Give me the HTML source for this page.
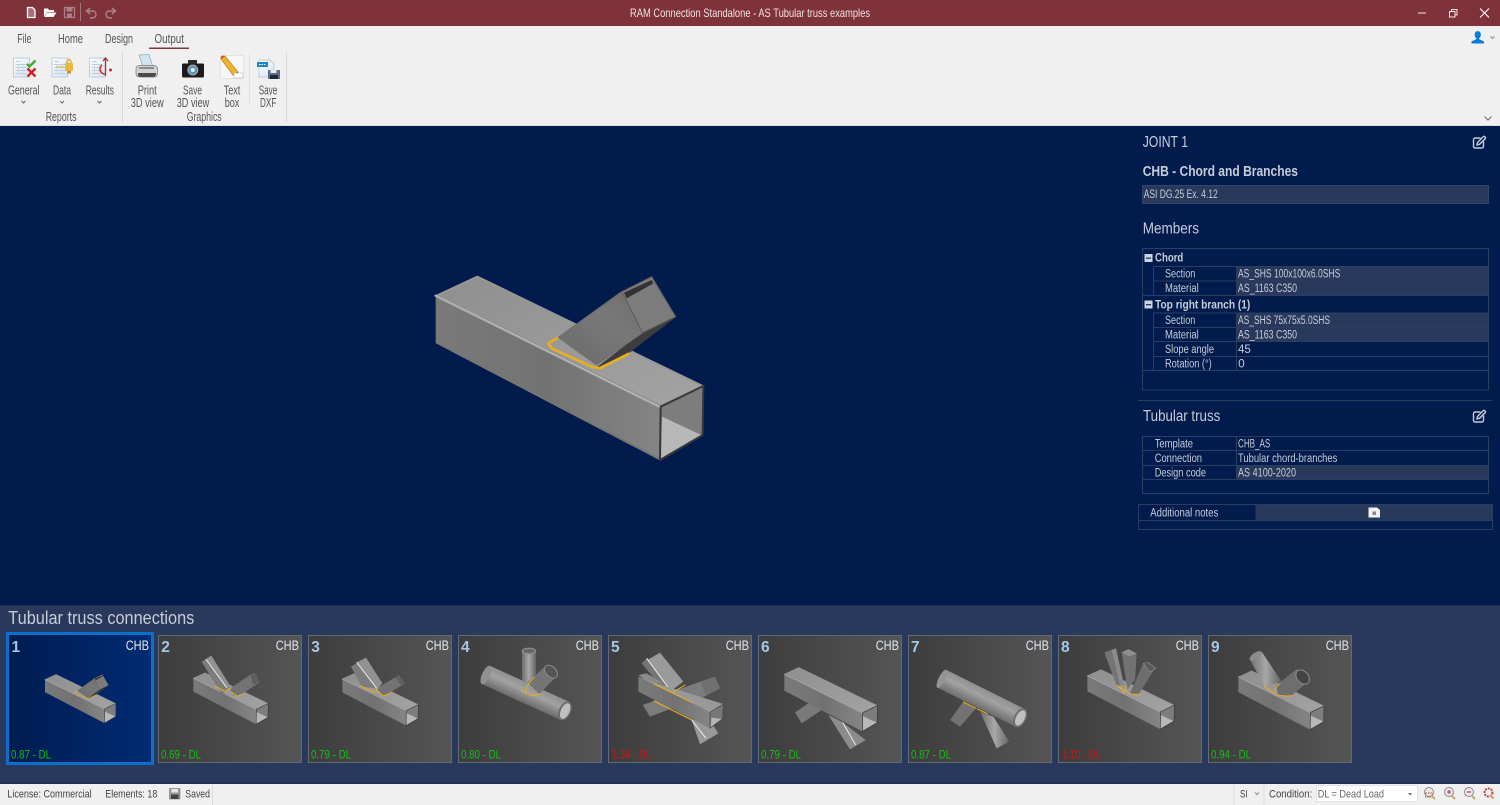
<!DOCTYPE html>
<html lang="en"><head><meta charset="utf-8"><title>RAM Connection Standalone</title>
<style>
html,body{margin:0;padding:0;background:#011b4d;overflow:hidden}
svg{display:block;font-family:"Liberation Sans",sans-serif}
.r{font-size:12.5px;fill:#555}
.t{font-size:11.5px;fill:#c6ccd8}
.b{font-size:12px;fill:#c6ccd8;font-weight:bold}
.h{font-size:15.5px;fill:#c6ccd8}
.c{font-size:13.5px;fill:#e2e7f0}
.n{font-size:15.5px;font-weight:bold;fill:#a3c6ea}
.g{font-size:11.5px;fill:#12c012}
.e{font-size:11.5px;fill:#c81818}
.s{font-size:11px;fill:#444}
.ln{stroke:#2b3d60;stroke-width:1;fill:none}
.fl{fill:#28395b}
.w{fill:none;stroke:#eaae1c;stroke-linejoin:round;stroke-linecap:round}
</style></head><body>
<svg width="1500" height="805" viewBox="0 0 1500 805" xmlns="http://www.w3.org/2000/svg">
<defs>
<filter id="soft" x="-5%" y="-5%" width="110%" height="110%"><feGaussianBlur stdDeviation="1"/></filter>
<linearGradient id="side" x1="0" y1="0" x2="1" y2="0"><stop offset="0" stop-color="#7a7a7a"/><stop offset=".5" stop-color="#727272"/><stop offset="1" stop-color="#858585"/></linearGradient>
<linearGradient id="top" x1="0" y1="0" x2="1" y2="1"><stop offset="0" stop-color="#8f8f8f"/><stop offset="1" stop-color="#a3a3a3"/></linearGradient>
<linearGradient id="bf" x1="0" y1="1" x2="1" y2="0"><stop offset="0" stop-color="#6a6a6a"/><stop offset=".6" stop-color="#787878"/><stop offset="1" stop-color="#6e6e6e"/></linearGradient>
<linearGradient id="gray" x1="0" y1="0" x2="1" y2="0"><stop offset="0" stop-color="#3d3d3d"/><stop offset="1" stop-color="#555"/></linearGradient>
<linearGradient id="blue" x1="0" y1="0" x2="1" y2="0"><stop offset="0" stop-color="#001c50"/><stop offset="1" stop-color="#002c74"/></linearGradient>
<linearGradient id="rnd" x1="0" y1="0" x2="0" y2="1"><stop offset="0" stop-color="#909090"/><stop offset=".4" stop-color="#a2a2a2"/><stop offset="1" stop-color="#6c6c6c"/></linearGradient>
<linearGradient id="rndv" x1="0" y1="0" x2="1" y2="0"><stop offset="0" stop-color="#6e6e6e"/><stop offset=".5" stop-color="#a8a8a8"/><stop offset="1" stop-color="#626262"/></linearGradient>
<linearGradient id="doc" x1="0" y1="0" x2="1" y2="1"><stop offset="0" stop-color="#fff"/><stop offset="1" stop-color="#d2e1ef"/></linearGradient>
<g id="chord">
<polygon points="50,107 172,50 848,378 722,438" fill="url(#top)" stroke="#979797" stroke-width="6" stroke-linejoin="round"/>
<polygon points="50,107 722,440 720,598 50,248" fill="url(#side)" stroke="#767676" stroke-width="6" stroke-linejoin="round"/>
<polyline points="47,107 722,442" stroke="#b0b0b0" stroke-width="7" fill="none" stroke-linecap="round"/>
<polygon points="724,442 848,380 846,525 722,598" fill="#7d7d7d"/>
<polygon points="726,470 844,525 722,596" fill="#b8b8b8"/>
<polygon points="722,440 850,378 848,525 720,600" fill="none" stroke="#383838" stroke-width="6" stroke-linejoin="round"/>
</g>
<g id="branch">
<polygon points="668,218 767,170 630,275 535,320" fill="#3c3c3c" stroke="#3c3c3c" stroke-width="3" stroke-linejoin="round"/>
<polyline class="w" points="415,232 385,250 395,265 515,320 540,325 625,282" stroke-width="8"/>
<polygon points="415,232 605,95 668,218 530,315" fill="url(#bf)" stroke="#6e6e6e" stroke-width="3" stroke-linejoin="round"/>
<polygon points="605,95 695,50 767,170 668,218" fill="#7c7c7c" stroke="#5c5c5c" stroke-width="3" stroke-linejoin="round"/>
<polygon points="612,98 695,60 700,70 620,115" fill="#333"/>
</g>
<g id="edit"><path d="M7.500 2.500H2a1.500 1.500 0 0 0-1.500 1.500v7A1.500 1.500 0 0 0 2 12.500h7a1.500 1.500 0 0 0 1.500-1.500V6" fill="none" stroke="#c6ccd8" stroke-width="1.400"/><path d="M4 9.300l.6-2.400L10.200 1.200a1 1 0 0 1 1.500 0l.5.500a1 1 0 0 1 0 1.500L6.500 8.800z" fill="none" stroke="#c6ccd8" stroke-width="1.400"/></g>
<g id="docic"><rect x=".5" y=".5" width="16" height="19" fill="url(#doc)" stroke="#bccee0"/><path d="M2.500 4h5M2.500 7h11M2.500 10h11M2.500 13h11M2.500 16h11" stroke="#bdcddc" stroke-width="1"/><path d="M5.500 7v10M10 7v10" stroke="#cddae6" stroke-width="1"/></g>
</defs>

<!-- base -->
<rect width="1500" height="805" fill="#011b4d"/>
<rect width="1500" height="26" fill="#7f323a"/>
<rect y="26" width="1500" height="100" fill="#f0f0f0"/>

<!-- title bar -->
<path d="M27.500 7.500h5l2.500 2.500v7.500h-7.500z" fill="#a87076" stroke="#fff" stroke-width="1.300"/>
<path d="M44 17V8.500h4l1 1.500h5v2h-7l-3 5z" fill="#fff"/><path d="M47 12.500h9.500L53.500 17H44.500z" fill="#fff"/>
<rect x="64.500" y="7.500" width="10" height="10" fill="none" stroke="#a98086" stroke-width="1.300"/><rect x="66.500" y="8" width="6" height="3.500" fill="#a98086"/><rect x="67" y="13.500" width="5" height="3.500" fill="#a98086"/>
<rect x="80" y="3" width="1" height="18" fill="#a57278"/>
<path d="M90 8l-3.500 3 3.500 3M87 11h5.500a3.500 3.500 0 0 1 0 7H90" fill="none" stroke="#a98086" stroke-width="1.500"/>
<path d="M112 8l3.500 3-3.500 3M115 11h-5.500a3.500 3.500 0 0 0 0 7H112" fill="none" stroke="#a98086" stroke-width="1.500"/>
<text x="630" y="17" font-size="12" fill="#efe2e3" textLength="240" lengthAdjust="spacingAndGlyphs">RAM Connection Standalone - AS Tubular truss examples</text>
<rect x="1418" y="12.500" width="8" height="1" fill="#f3e6e7"/>
<path d="M1449.500 11.500h5.500v5.500h-5.500zM1451.500 11.500v-2h5.500v5.500h-2" fill="none" stroke="#f3e6e7" stroke-width="1"/>
<path d="M1480 8.500l9 9M1489 8.500l-9 9" stroke="#fff" stroke-width="1.100"/>

<!-- ribbon tabs -->
<text class="r" x="17.300" y="43" textLength="14" lengthAdjust="spacingAndGlyphs">File</text>
<text class="r" x="58" y="43" textLength="25" lengthAdjust="spacingAndGlyphs">Home</text>
<text class="r" x="105" y="43" textLength="28" lengthAdjust="spacingAndGlyphs">Design</text>
<text class="r" x="154.500" y="43" textLength="29.500" lengthAdjust="spacingAndGlyphs">Output</text>
<rect x="149" y="47.500" width="40" height="1.500" fill="#80343c"/>
<path d="M1477.700 31a3.200 3.600 0 0 1 3.200 3.600c0 1.800-1 3.100-1.700 3.700v.8l4.800 2.400v2h-12.500v-2l4.800-2.400v-.8c-.7-.6-1.700-1.900-1.700-3.700a3.200 3.600 0 0 1 3.200-3.600z" fill="#0b7bdc"/>
<path d="M1490.500 36.500l2 2 2-2" fill="none" stroke="#888" stroke-width="1"/>
<path d="M1484.500 116.500l3.500 3.500 3.500-3.500" fill="none" stroke="#666" stroke-width="1"/>

<!-- ribbon icons: reports -->
<use href="#docic" x="13" y="57.500"/>
<path d="M27 64l2.500 2.500 6-6" fill="none" stroke="#3fae2a" stroke-width="2.300"/>
<path d="M27.500 68.500l8 8M35.500 68.500l-8 8" stroke="#d0211f" stroke-width="2.300"/>
<use href="#docic" x="51.500" y="57.500"/>
<rect x="65" y="63" width="8" height="8" rx="1" fill="#e8b93a"/><path d="M67 63v-1.500a2 2 0 0 1 4 0V63" fill="none" stroke="#d8a82a" stroke-width="1.200"/><path d="M56 67h9" stroke="#e6c23c" stroke-width="1.500" stroke-dasharray="2 1"/><rect x="67" y="71" width="4" height="2.500" fill="#d08a30"/>
<use href="#docic" x="89" y="57.500"/>
<path d="M105.500 58v18M103 61l2.500-3 2.500 3" fill="none" stroke="#b52a2a" stroke-width="1.300"/><path d="M102 65a5 5 0 0 0 3 9" fill="none" stroke="#cc2a2a" stroke-width="1.500"/><circle cx="110.500" cy="70" r="1.500" fill="#cc2a2a"/>
<text class="r" x="8" y="94.500" textLength="31.500" lengthAdjust="spacingAndGlyphs">General</text>
<text class="r" x="53" y="94.500" textLength="18" lengthAdjust="spacingAndGlyphs">Data</text>
<text class="r" x="85.700" y="94.500" textLength="28.300" lengthAdjust="spacingAndGlyphs">Results</text>
<path d="M21.500 101l2 2 2-2M60 101l2 2 2-2M97.500 101l2 2 2-2" fill="none" stroke="#666" stroke-width="1"/>
<text class="r" x="45.700" y="121" textLength="30.800" lengthAdjust="spacingAndGlyphs">Reports</text>
<rect x="122" y="52" width="1" height="70" fill="#d8d8d8"/>
<!-- printer -->
<polygon points="139,55 149,54.500 153,67 143,67" fill="#cfe6f4" stroke="#8fa9bc" stroke-width=".7"/>
<path d="M136 69q0-3.500 4-3.500h13q4.500 0 4.500 3.500v4q0 4-4 4H140q-4 0-4-4z" fill="#d4d4d4" stroke="#777" stroke-width=".7"/>
<rect x="139" y="67" width="15" height="2" fill="#8a8a8a"/>
<path d="M138 73h18v1.500q-1 2.500-3.500 2.500h-11q-3.500 0-3.500-2.500z" fill="#4a4a4a"/>
<text class="r" x="137.700" y="94.500" textLength="19" lengthAdjust="spacingAndGlyphs">Print</text>
<text class="r" x="130.700" y="107" textLength="33" lengthAdjust="spacingAndGlyphs">3D view</text>
<!-- camera -->
<rect x="182" y="63.500" width="22" height="14" rx="1.500" fill="#1b1b1b"/><rect x="188" y="60" width="9" height="4" fill="#2a2a2a"/><circle cx="192.800" cy="70" r="5" fill="#5d93bd" stroke="#aaa" stroke-width="1"/><circle cx="192.800" cy="70" r="2" fill="#dfeefa"/>
<text class="r" x="183" y="94.500" textLength="19" lengthAdjust="spacingAndGlyphs">Save</text>
<text class="r" x="176.700" y="107" textLength="32.600" lengthAdjust="spacingAndGlyphs">3D view</text>
<!-- pencil -->
<rect x="220.500" y="55.500" width="23" height="23" fill="#f6f6f6" stroke="#e4e4e4"/>
<polygon points="221,59 225,56 238,72 233,75" fill="#eeb32e" stroke="#b8841a" stroke-width=".7"/>
<polygon points="221,59 225,56 223,55.500 220.500,57" fill="#d2413a"/>
<polygon points="233,75 238,72 238.500,76" fill="#222"/>
<rect x="234" y="73" width="9" height="5" fill="#fff" stroke="#bbb" stroke-width=".6"/>
<text class="r" x="223.700" y="94.500" textLength="16.600" lengthAdjust="spacingAndGlyphs">Text</text>
<text class="r" x="224.700" y="107" textLength="14.600" lengthAdjust="spacingAndGlyphs">box</text>
<path d="M249.500 55v50" stroke="#d5d5d5" stroke-dasharray="1 1"/>
<!-- dxf -->
<path d="M259 60h11l4 4v13h-15z" fill="url(#doc)" stroke="#a9bfd6" stroke-width=".7"/>
<rect x="257" y="62" width="11" height="5" fill="#1f86c4"/><path d="M259 64.500h7" stroke="#fff" stroke-dasharray="1.500 1"/>
<rect x="268" y="70" width="12" height="9" fill="#5a6d82"/><rect x="270.500" y="70" width="6" height="3" fill="#e3ecf3"/><rect x="270" y="75" width="8" height="4" fill="#1d2b38"/>
<text class="r" x="258.700" y="94.500" textLength="18.600" lengthAdjust="spacingAndGlyphs">Save</text>
<text class="r" x="260" y="107" textLength="16.300" lengthAdjust="spacingAndGlyphs">DXF</text>
<text class="r" x="186.700" y="121" textLength="35" lengthAdjust="spacingAndGlyphs">Graphics</text>
<rect x="286" y="52" width="1" height="70" fill="#d8d8d8"/>
<rect y="125" width="1500" height="1" fill="#dcdcdc"/>

<!-- main 3D model -->
<g transform="translate(420 260) scale(.33333)" filter="url(#soft)">
<use href="#chord"/><use href="#branch"/>
</g>

<!-- right panel -->
<text class="h" x="1142.700" y="147" textLength="45.300" lengthAdjust="spacingAndGlyphs">JOINT 1</text>
<use href="#edit" x="1473" y="135.500"/>
<text x="1142.700" y="176" font-size="14.500" font-weight="bold" fill="#c6ccd8" textLength="155.300" lengthAdjust="spacingAndGlyphs">CHB - Chord and Branches</text>
<rect class="fl" x="1142.500" y="185.500" width="346" height="18" stroke="#33456a"/>
<text class="t" x="1143.700" y="198" textLength="74" lengthAdjust="spacingAndGlyphs">ASI DG.25 Ex. 4.12</text>
<text class="h" x="1142.700" y="233.500" textLength="56.300" lengthAdjust="spacingAndGlyphs">Members</text>

<rect class="fl" x="1237" y="266.500" width="251" height="29"/>
<rect class="fl" x="1237" y="313" width="251" height="29"/>
<path class="ln" d="M1142.500 248.500h346v141.500h-346zM1153.500 266.500h335M1153.500 281h335M1142.500 295.500h346M1153.500 313h335M1153.500 327.500h335M1153.500 341.500h335M1153.500 356.500h335M1142.500 370.500h346M1153.500 266.500v29M1153.500 313v57.500M1236.500 266.500v29M1236.500 313v57.500"/>
<rect x="1144.500" y="254" width="8" height="8" fill="#c9d4e4"/><rect x="1146" y="257.500" width="5" height="1.300" fill="#2b3d60"/>
<text class="b" x="1155" y="261.700" textLength="28.300" lengthAdjust="spacingAndGlyphs">Chord</text>
<text class="t" x="1165" y="277.700" textLength="30.300" lengthAdjust="spacingAndGlyphs">Section</text>
<text class="t" x="1238" y="277.700" textLength="102.300" lengthAdjust="spacingAndGlyphs">AS_SHS 100x100x6.0SHS</text>
<text class="t" x="1165" y="292" textLength="33.700" lengthAdjust="spacingAndGlyphs">Material</text>
<text class="t" x="1238" y="292" textLength="59" lengthAdjust="spacingAndGlyphs">AS_1163 C350</text>
<rect x="1144.500" y="300.500" width="8" height="8" fill="#c9d4e4"/><rect x="1146" y="304" width="5" height="1.300" fill="#2b3d60"/>
<text class="b" x="1155" y="308.500" textLength="95.300" lengthAdjust="spacingAndGlyphs">Top right branch (1)</text>
<text class="t" x="1165" y="324" textLength="30.300" lengthAdjust="spacingAndGlyphs">Section</text>
<text class="t" x="1238" y="324" textLength="92" lengthAdjust="spacingAndGlyphs">AS_SHS 75x75x5.0SHS</text>
<text class="t" x="1165" y="338.500" textLength="33.700" lengthAdjust="spacingAndGlyphs">Material</text>
<text class="t" x="1238" y="338.500" textLength="59" lengthAdjust="spacingAndGlyphs">AS_1163 C350</text>
<text class="t" x="1165" y="353" textLength="49" lengthAdjust="spacingAndGlyphs">Slope angle</text>
<text class="t" x="1238" y="353">45</text>
<text class="t" x="1165" y="367.500" textLength="46.700" lengthAdjust="spacingAndGlyphs">Rotation (°)</text>
<text class="t" x="1238.300" y="367.500">0</text>

<path class="ln" d="M1138 400.500h354"/>
<text class="h" x="1143" y="421" textLength="77.300" lengthAdjust="spacingAndGlyphs">Tubular truss</text>
<use href="#edit" x="1473" y="409.500"/>
<rect class="fl" x="1237" y="465.500" width="251" height="14"/>
<path class="ln" d="M1142.500 436.500h346v57h-346zM1142.500 450.500h346M1142.500 465.500h346M1142.500 479.500h346M1236.500 436.500v43"/>
<text class="t" x="1154.700" y="447.700" textLength="38.300" lengthAdjust="spacingAndGlyphs">Template</text>
<text class="t" x="1238" y="447.700" textLength="32.300" lengthAdjust="spacingAndGlyphs">CHB_AS</text>
<text class="t" x="1154.700" y="462" textLength="47.300" lengthAdjust="spacingAndGlyphs">Connection</text>
<text class="t" x="1238" y="462" textLength="99.300" lengthAdjust="spacingAndGlyphs">Tubular chord-branches</text>
<text class="t" x="1154.700" y="476.500" textLength="51.300" lengthAdjust="spacingAndGlyphs">Design code</text>
<text class="t" x="1238" y="476.500" textLength="58" lengthAdjust="spacingAndGlyphs">AS 4100-2020</text>

<rect class="fl" x="1256" y="504.500" width="236" height="16"/>
<path class="ln" d="M1138.500 504.500h354v25h-354zM1138.500 520.500h354M1256 504.500v16"/>
<text class="t" x="1150.300" y="516.700" textLength="68" lengthAdjust="spacingAndGlyphs">Additional notes</text>
<path d="M1368.500 507.500h8.500l3 2.500v7.500h-11.500z" fill="#f0f0f0"/><rect x="1372.500" y="511.500" width="3.500" height="3.500" fill="#8a8a8a"/>

<!-- bottom panel -->
<rect y="605" width="1500" height="179" fill="#28395b"/>
<rect y="605" width="1500" height="1" fill="#1f3153"/>
<rect y="782.500" width="1500" height="1.500" fill="#1f3050"/>
<text x="8.300" y="624" font-size="18" fill="#c6ccd8" textLength="186" lengthAdjust="spacingAndGlyphs">Tubular truss connections</text>

<rect x="7.500" y="633.500" width="145" height="130" fill="url(#blue)" stroke="#0a70cc" stroke-width="3"/>
<rect x="158.500" y="635.500" width="143" height="127" fill="url(#gray)" stroke="#626a7a"/>
<rect x="308.500" y="635.500" width="143" height="127" fill="url(#gray)" stroke="#626a7a"/>
<rect x="458.500" y="635.500" width="143" height="127" fill="url(#gray)" stroke="#626a7a"/>
<rect x="608.500" y="635.500" width="143" height="127" fill="url(#gray)" stroke="#626a7a"/>
<rect x="758.500" y="635.500" width="143" height="127" fill="url(#gray)" stroke="#626a7a"/>
<rect x="908.500" y="635.500" width="143" height="127" fill="url(#gray)" stroke="#626a7a"/>
<rect x="1058.500" y="635.500" width="143" height="127" fill="url(#gray)" stroke="#626a7a"/>
<rect x="1208.500" y="635.500" width="143" height="127" fill="url(#gray)" stroke="#626a7a"/>

<!-- thumbs 1-3 -->
<g transform="translate(0 605) scale(.33333)">
<g transform="translate(122.500 195.300) scale(.265)"><use href="#chord"/><use href="#branch"/></g>

<g transform="translate(566.800 189.600) scale(.28)"><use href="#chord"/></g>
<polygon points="605,170 634,152 690,242 670,270 650,245" fill="#7c7c7c"/>
<polygon points="618,162 634,152 690,242 680,250" fill="#929292"/>
<path d="M618,163 L680,248" stroke="#e8e8e8" stroke-width="3"/>
<polygon points="690,250 750,210 778,232 720,272 700,272" fill="#737373"/>
<polygon points="750,210 765,205 778,232 760,240" fill="#5e5e5e" stroke="#7e7e7e"/>
<path class="w" d="M645,243 L680,262M680,255 L692,250M695,262 L712,274 L730,266" stroke-width="3"/>

<g transform="translate(1013.700 191.400) scale(.284)"><use href="#chord"/></g>
<polygon points="1053,185 1098,158 1147,235 1130,250 1085,245" fill="#7c7c7c"/>
<polygon points="1070,172 1098,158 1147,235 1130,250" fill="#929292"/>
<path d="M1070,172 L1130,250" stroke="#e8e8e8" stroke-width="3"/>
<polygon points="1130,250 1195,212 1215,235 1150,275" fill="#737373"/>
<polygon points="1185,218 1197,210 1215,235 1205,243" fill="#626262"/>
<path class="w" d="M1080,243 L1125,262M1128,255 L1132,250M1128,255 L1150,273 L1175,263" stroke-width="3"/>
</g>

<!-- thumbs 4-6 -->
<g transform="translate(450 625) scale(.33333)">
<polygon points="216,78 258,78 258,195 216,195" fill="url(#rndv)"/>
<ellipse cx="237" cy="78" rx="21" ry="9" fill="#777" stroke="#999" stroke-width="2"/><ellipse cx="237" cy="78" rx="15" ry="5" fill="#666"/>
<g transform="rotate(24.500 240 210)"><rect x="95" y="180" width="260" height="60" fill="url(#rnd)"/><ellipse cx="95" cy="210" rx="12" ry="30" fill="#909090"/><ellipse cx="355" cy="210" rx="18" ry="30" fill="#6d6d6d"/><ellipse cx="356" cy="210" rx="13" ry="25" fill="#c0c0c0"/></g>
<polygon points="232,172 285,125 322,152 268,207" fill="#747474"/>
<ellipse cx="303" cy="140" rx="15" ry="23" transform="rotate(-45 303 140)" fill="#555" stroke="#8a8a8a" stroke-width="3"/>
<path class="w" d="M214,195 Q235,218 272,207M226,202 Q232,175 252,158" stroke-width="3"/>

<polygon points="578,240 620,225 665,250 600,275" fill="#7c7c7c"/>
<polygon points="575,115 630,83 700,170 660,200" fill="#9a9a9a"/>
<polygon points="575,115 590,100 662,198 650,205" fill="#767676"/>
<polygon points="725,285 770,270 805,325 750,358" fill="#999"/>
<path d="M590,100L662,198M725,285L768,340" stroke="#eee" stroke-width="3"/>
<polygon points="565,150 590,145 640,175 600,175" fill="#8a8a8a"/>
<polygon points="680,195 795,155 810,190 725,235" fill="#7c7c7c"/>
<polygon points="750,170 795,155 810,190 768,212" fill="#707070"/>
<polygon points="565,155 610,172 820,237 780,262" fill="#999"/>
<polygon points="565,155 780,262 780,310 565,200" fill="url(#side)"/>
<polygon points="780,262 820,237 818,280 780,310" fill="#777" stroke="#444" stroke-width="2"/>
<polygon points="784,278 815,282 782,306" fill="#b5b5b5"/>
<path class="w" d="M612,177 L725,232M612,228 L725,285M672,200 L705,180" stroke-width="3"/>

<polygon points="1035,262 1075,235 1115,255 1055,295" fill="#7a7a7a"/>
<polygon points="1135,270 1175,290 1247,345 1200,373" fill="#8c8c8c"/>
<path d="M1178,292 L1217,360" stroke="#eee" stroke-width="3"/>
<g transform="translate(986.600 110.300) scale(.348)"><use href="#chord"/></g>
</g>

<!-- thumbs 7-9 -->
<g transform="translate(900 625) scale(.33333)">
<polygon points="150,285 190,230 228,250 180,305" fill="#737373"/>
<polygon points="240,260 280,275 328,350 290,370" fill="url(#rndv)"/>
<g transform="rotate(26.500 243 220)"><rect x="112" y="190" width="262" height="60" fill="url(#rnd)"/><ellipse cx="112" cy="220" rx="10" ry="30" fill="#949494"/><ellipse cx="374" cy="220" rx="18" ry="31" fill="#6e6e6e"/><ellipse cx="375" cy="220" rx="13" ry="25" fill="#c0c0c0"/></g>
<path class="w" d="M190,231 L228,250M232,252 L262,266" stroke-width="3"/>

<g transform="translate(546.700 117.600) scale(.325)"><use href="#chord"/></g>
<polygon points="613,82 648,70 672,180 650,182" fill="#747474"/>
<polygon points="635,75 648,70 672,180 660,182" fill="#8a8a8a"/>
<polygon points="665,82 710,85 705,165 682,192" fill="#727272"/>
<polygon points="665,82 685,72 710,85 688,95" fill="#8f8f8f"/>
<polygon points="730,115 765,130 715,210 690,205" fill="#6e6e6e"/>
<polygon points="730,115 745,112 767,130 750,142" fill="#5a5a5a" stroke="#8c8c8c" stroke-width="2"/>
<path class="w" d="M650,182 L690,207 L722,208M680,183 L675,197M662,185 L672,205" stroke-width="3"/>

<g transform="translate(1000 121.600) scale(.32)"><use href="#chord"/></g>
<polygon points="1050,105 1085,80 1145,170 1095,185" fill="url(#rndv)"/>
<ellipse cx="1067" cy="93" rx="21" ry="10" transform="rotate(-35 1067 93)" fill="#8c8c8c"/>
<polygon points="1128,182 1190,132 1230,165 1175,212 1135,212" fill="#6e6e6e"/>
<ellipse cx="1208" cy="156" rx="17" ry="24" transform="rotate(-40 1208 156)" fill="#444" stroke="#8c8c8c" stroke-width="3"/>
<path class="w" d="M1092,184 Q1110,196 1125,206 Q1145,216 1178,212M1125,200 Q1125,185 1140,176" stroke-width="3"/>
</g>

<!-- thumb text -->
<text class="n" x="11.500" y="652">1</text><text class="n" x="161.300" y="652">2</text><text class="n" x="311.300" y="652">3</text><text class="n" x="461" y="652">4</text><text class="n" x="611" y="652">5</text><text class="n" x="761" y="652">6</text><text class="n" x="911" y="652">7</text><text class="n" x="1061" y="652">8</text><text class="n" x="1211" y="652">9</text>
<text class="c" x="125.700" y="650" textLength="23.300" lengthAdjust="spacingAndGlyphs">CHB</text>
<text class="c" x="275.700" y="650" textLength="23.300" lengthAdjust="spacingAndGlyphs">CHB</text>
<text class="c" x="425.700" y="650" textLength="23.300" lengthAdjust="spacingAndGlyphs">CHB</text>
<text class="c" x="575.700" y="650" textLength="23.300" lengthAdjust="spacingAndGlyphs">CHB</text>
<text class="c" x="725.700" y="650" textLength="23.300" lengthAdjust="spacingAndGlyphs">CHB</text>
<text class="c" x="875.700" y="650" textLength="23.300" lengthAdjust="spacingAndGlyphs">CHB</text>
<text class="c" x="1025.700" y="650" textLength="23.300" lengthAdjust="spacingAndGlyphs">CHB</text>
<text class="c" x="1175.700" y="650" textLength="23.300" lengthAdjust="spacingAndGlyphs">CHB</text>
<text class="c" x="1325.700" y="650" textLength="23.300" lengthAdjust="spacingAndGlyphs">CHB</text>
<text class="g" x="11" y="758.500" textLength="40" lengthAdjust="spacingAndGlyphs">0.87 - DL</text>
<text class="g" x="161" y="758.500" textLength="40" lengthAdjust="spacingAndGlyphs">0.69 - DL</text>
<text class="g" x="311" y="758.500" textLength="40" lengthAdjust="spacingAndGlyphs">0.79 - DL</text>
<text class="g" x="461" y="758.500" textLength="40" lengthAdjust="spacingAndGlyphs">0.80 - DL</text>
<text class="e" x="612" y="758.500" textLength="39" lengthAdjust="spacingAndGlyphs">1.34 - DL</text>
<text class="g" x="761" y="758.500" textLength="40" lengthAdjust="spacingAndGlyphs">0.79 - DL</text>
<text class="g" x="911" y="758.500" textLength="40" lengthAdjust="spacingAndGlyphs">0.87 - DL</text>
<text class="e" x="1062" y="758.500" textLength="39" lengthAdjust="spacingAndGlyphs">1.10 - DL</text>
<text class="g" x="1211" y="758.500" textLength="40" lengthAdjust="spacingAndGlyphs">0.94 - DL</text>

<!-- status bar -->
<rect y="784" width="1500" height="21" fill="#f0f0f0"/>
<text class="s" x="7.300" y="797.500" textLength="84.400" lengthAdjust="spacingAndGlyphs">License: Commercial</text>
<text class="s" x="105.300" y="797.500" textLength="52" lengthAdjust="spacingAndGlyphs">Elements: 18</text>
<rect x="169.500" y="788.500" width="10.500" height="10.500" fill="#9a9a9a" stroke="#777" stroke-width=".6"/><rect x="171.500" y="789" width="6.500" height="3.500" fill="#e6e6e6"/><rect x="171" y="794.500" width="7.500" height="4.500" fill="#444"/>
<text class="s" x="185.300" y="797.500" textLength="24.700" lengthAdjust="spacingAndGlyphs">Saved</text>
<rect x="212" y="784" width="1" height="21" fill="#dcdcdc"/>
<rect x="1233.500" y="784" width="1" height="21" fill="#dcdcdc"/><rect x="1263.500" y="784" width="1" height="21" fill="#dcdcdc"/>
<text class="s" x="1240" y="797.500" textLength="7.500" lengthAdjust="spacingAndGlyphs">SI</text>
<path d="M1255 792.500l2 2 2-2" fill="none" stroke="#888" stroke-width="1"/>
<text class="s" x="1269" y="797.500" textLength="43.300" lengthAdjust="spacingAndGlyphs">Condition:</text>
<rect x="1316.500" y="785.500" width="101" height="16" fill="#fff" stroke="#e2e2e2"/>
<text class="s" x="1317.700" y="797.500" style="fill:#666" textLength="66.300" lengthAdjust="spacingAndGlyphs">DL = Dead Load</text>
<path d="M1408 793h4l-2 2.500z" fill="#666"/>
<g fill="none" stroke-width="1">
<circle cx="1429" cy="792" r="4.500" fill="#e8e8e8" stroke="#8d8d8d"/><rect x="1425.500" y="793" width="7" height="4" stroke="#c25050" stroke-dasharray="1.500 1"/><path d="M1432 796l3 3" stroke="#c9a864" stroke-width="2"/>
<circle cx="1449" cy="792" r="4.500" fill="#e8e8e8" stroke="#8d8d8d"/><circle cx="1449" cy="792" r="1.700" fill="#c9596a"/><path d="M1452 796l3 3" stroke="#c9a864" stroke-width="2"/>
<circle cx="1469" cy="792" r="4.500" fill="#e8e8e8" stroke="#8d8d8d"/><path d="M1467 792h4" stroke="#c9596a" stroke-width="1.500"/><path d="M1472 796l3 3" stroke="#c9a864" stroke-width="2"/>
<circle cx="1488.500" cy="792.500" r="4" stroke="#b94a4a" stroke-width="2" stroke-dasharray="2 1"/><path d="M1490 795l3.500 3.500" stroke="#c9a864" stroke-width="2"/>
</g>
</svg>
</body></html>
